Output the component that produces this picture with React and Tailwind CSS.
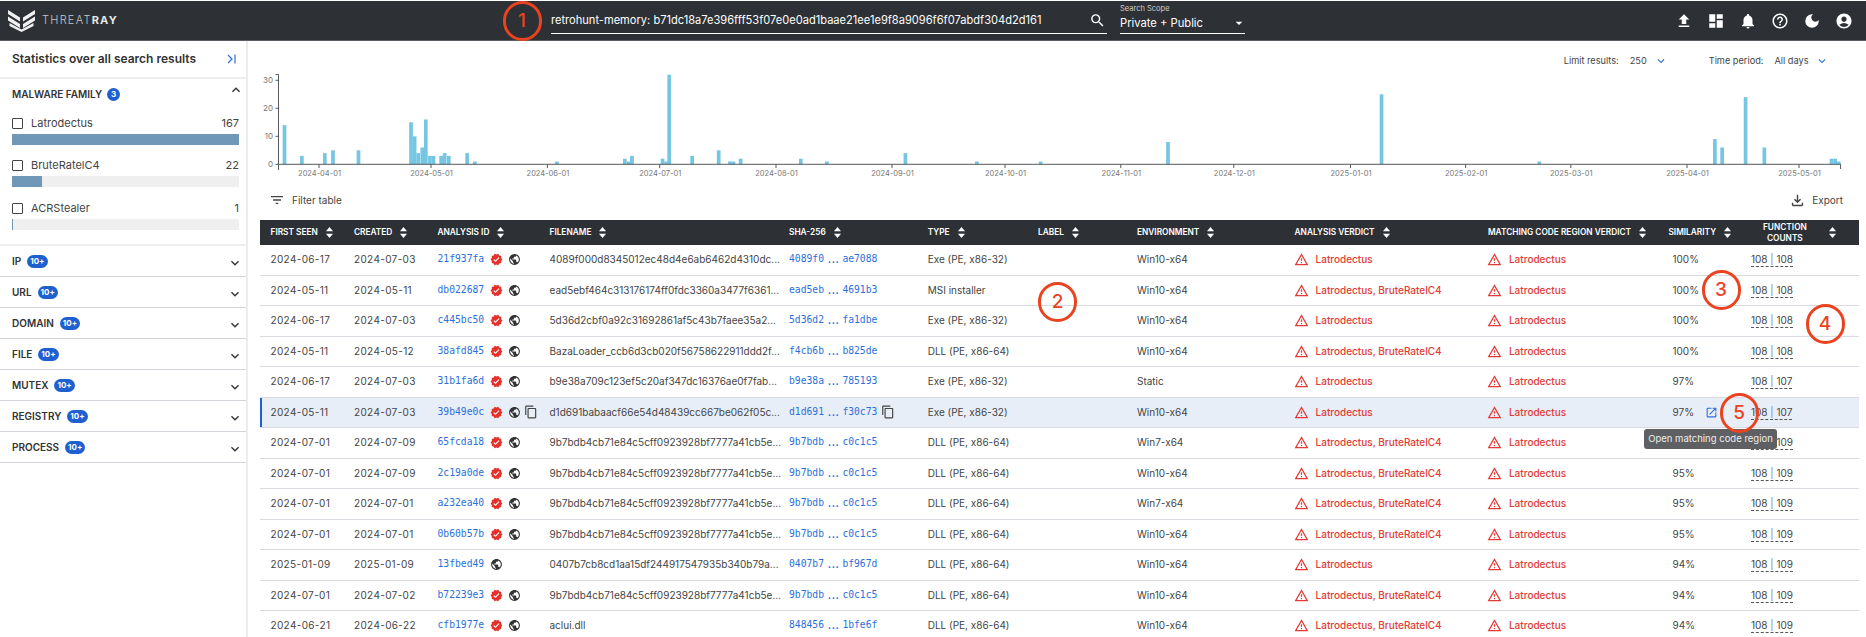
import React from "react";
import {
  MdFileUpload, MdDashboard, MdNotifications, MdHelpOutline, MdDarkMode, MdAccountCircle, MdSearch,
  MdArrowDropDown, MdKeyboardArrowDown, MdKeyboardArrowUp, MdFilterList, MdVerified, MdPublic,
  MdContentCopy, MdOpenInNew, MdOutlineFileDownload, MdOutlineWarningAmber,
} from "react-icons/md";

const bars5 = [[64,14],[98,3],[143,4],[159,5],[209,5],[312,15],[319,10],[326,4],[334,6],[341,16],[349,3],[356,3],[371,3],[378,4],[386,3],[422,4],[437,1],[598,1],[731,2],[738,1],[745,3],[805,2],[812,1],[818,32],[863,3],[915,5],[937,1],[944,1],[958,2],[1076,2],[1127,1],[1281,4],[1421,1],[1546,1]];
const bars6 = [[223,8],[633,25],[936,1],[1273,9],[1287,6],[1332,24],[1368,6],[1497,2],[1504,2],[1511,1]];
const bars = [...bars5.map(([x, v]) => [250 + x / 1.96, v]), ...bars6.map(([x, v]) => [1050 + x / 1.92, v])];
const ticks = [[319,"2024-04-01"],[431,"2024-05-01"],[547.4,"2024-06-01"],[659.7,"2024-07-01"],[776,"2024-08-01"],[892,"2024-09-01"],[1005,"2024-10-01"],[1120.8,"2024-11-01"],[1233.8,"2024-12-01"],[1350.5,"2025-01-01"],[1465.6,"2025-02-01"],[1570.8,"2025-03-01"],[1687,"2025-04-01"],[1799,"2025-05-01"]];

const L = ["Latrodectus"];
const LB = ["Latrodectus, BruteRatelC4"];
const E32 = "Exe (PE, x86-32)";
const D64 = "DLL (PE, x86-64)";
const W10 = "Win10-x64";
const W7 = "Win7-x64";
const F9 = "9b7bdb4cb71e84c5cff0923928bf7777a41cb5e...";
const rows = [
  ["2024-06-17","2024-07-03","21f937fa","4089f000d8345012ec48d4e6ab6462d4310dc...",["4089f0","ae7088"],E32,W10,L,"100%","108","108",1],
  ["2024-05-11","2024-05-11","db022687","ead5ebf464c313176174ff0fdc3360a3477f6361...",["ead5eb","4691b3"],"MSI installer",W10,LB,"100%","108","108",1],
  ["2024-06-17","2024-07-03","c445bc50","5d36d2cbf0a92c31692861af5c43b7faee35a2...",["5d36d2","fa1dbe"],E32,W10,L,"100%","108","108",1],
  ["2024-05-11","2024-05-12","38afd845","BazaLoader_ccb6d3cb020f56758622911ddd2f...",["f4cb6b","b825de"],D64,W10,LB,"100%","108","108",1],
  ["2024-06-17","2024-07-03","31b1fa6d","b9e38a709c123ef5c20af347dc16376ae0f7fab...",["b9e38a","785193"],E32,"Static",L,"97%","108","107",1],
  ["2024-05-11","2024-07-03","39b49e0c","d1d691babaacf66e54d48439cc667be062f05c...",["d1d691","f30c73"],E32,W10,L,"97%","108","107",1],
  ["2024-07-01","2024-07-09","65fcda18",F9,["9b7bdb","c0c1c5"],D64,W7,LB,"95%","108","109",1],
  ["2024-07-01","2024-07-09","2c19a0de",F9,["9b7bdb","c0c1c5"],D64,W10,LB,"95%","108","109",1],
  ["2024-07-01","2024-07-01","a232ea40",F9,["9b7bdb","c0c1c5"],D64,W7,LB,"95%","108","109",1],
  ["2024-07-01","2024-07-01","0b60b57b",F9,["9b7bdb","c0c1c5"],D64,W10,LB,"95%","108","109",1],
  ["2025-01-09","2025-01-09","13fbed49","0407b7cb8cd1aa15df244917547935b340b79a...",["0407b7","bf967d"],D64,W10,L,"94%","108","109",0],
  ["2024-07-01","2024-07-02","b72239e3",F9,["9b7bdb","c0c1c5"],D64,W10,LB,"94%","108","109",1],
  ["2024-06-21","2024-06-22","cfb1977e","aclui.dll",["848456","1bfe6f"],D64,W10,LB,"94%","108","109",1],
];

const gridCols = "grid grid-cols-[83.5px_83.5px_112px_239.5px_138.7px_110.3px_99px_157.6px_193.4px_180.5px_82.5px_1fr]";

function Sort() {
  return (
    <svg width="7" height="11" viewBox="0 0 7 11" className="shrink-0" fill="#fff">
      <path d="M0 4.2 3.5 0 7 4.2Z" />
      <path d="M0 6.8H7L3.5 11Z" />
    </svg>
  );
}

function Head({ children }) {
  return <div className="flex items-center gap-[8px]"><span>{children}</span><Sort /></div>;
}

function Verdict({ text }) {
  return (
    <div className="flex items-center gap-[7px] text-[#e23b36] font-medium">
      <MdOutlineWarningAmber className="text-[15px] -ml-[1px] shrink-0" />
      <span>{text}</span>
    </div>
  );
}

function Circle({ n, className }) {
  return (
    <div className={"absolute w-[39px] h-[40px] rounded-full border-[3.5px] border-[#e9431f] flex items-center justify-center text-[#e9431f] text-[19px] font-medium " + className}>
      {n}
    </div>
  );
}

function Badge({ children }) {
  return <span className="inline-flex items-center justify-center rounded-full bg-[#1f60d0] text-white text-[8px] font-bold h-[13px] min-w-[13px] px-[3px] leading-none">{children}</span>;
}

function Family({ name, count, fill }) {
  return (
    <div className="h-[42.5px]">
      <div className="h-[18px] flex items-center text-[11px] text-[#444]">
        <span className="w-[11px] h-[11px] border border-[#444] rounded-[1px] mr-[8px]" />
        <span className="flex-1">{name}</span>
        <span>{count}</span>
      </div>
      <div className="mt-[1.5px] h-[11px] bg-[#efefef]">
        <div className={"h-full " + fill} />
      </div>
    </div>
  );
}

const sections = ["IP", "URL", "DOMAIN", "FILE", "MUTEX", "REGISTRY", "PROCESS"];

export default function App() {
  return (
    <div className="relative w-[1866px] h-[637px] overflow-hidden bg-white font-[Inter,sans-serif] text-[#444] pt-[1px]">
      <header className="h-[40px] bg-[#2d3135] border-b border-[#5a5e62] flex items-center text-white">
        <div className="w-[551px] pl-[8px] flex items-center shrink-0">
          <svg width="27" height="22" viewBox="0 0 27 22" fill="#f0f0f0">
            <path d="M0 0 12 7.5V11.5L0 4Z" />
            <path d="M27 0 15 7.5V11.5L27 4Z" />
            <path d="M0 6.5 12 14V18L0 10.5Z" />
            <path d="M27 6.5 15 14V18L27 10.5Z" />
            <path d="M1.5 13 13.5 19.5 25.5 13V16L13.5 22 1.5 16Z" />
          </svg>
          <span className="ml-[7px] text-[11px] tracking-[1.25px]">
            <span className="font-light text-[#c4c6c8]">THREAT</span>
            <span className="font-bold text-[#e6e6e6]">RAY</span>
          </span>
        </div>
        <div className="w-[555.5px] h-[25px] mt-[1px] border-b border-white flex items-center justify-between shrink-0">
          <span className="text-[11.1px] whitespace-nowrap">retrohunt-memory: b71dc18a7e396fff53f07e0e0ad1baae21ee1e9f8a9096f6f07abdf304d2d161</span>
          <MdSearch className="text-[17px] mr-[1px]" />
        </div>
        <div className="ml-[13.5px] w-[125px] h-[30px] -mt-[3px] border-b border-white shrink-0 relative">
          <div className="text-[7.5px] leading-[10px] text-[#d0d0d0]">Search Scope</div>
          <div className="flex items-center justify-between text-[11.2px] leading-[18px]">
            <span>Private + Public</span>
            <MdArrowDropDown className="text-[16px] mr-[-2px]" />
          </div>
        </div>
        <div className="ml-auto pr-[13px] flex items-center gap-[14px] text-[18px]">
          <MdFileUpload />
          <MdDashboard />
          <MdNotifications />
          <MdHelpOutline />
          <MdDarkMode />
          <MdAccountCircle />
        </div>
      </header>

      <div className="flex h-[596px]">
        <aside className="w-[248px] shrink-0 border-r-2 border-[#ececec]">
          <div className="h-[38px] px-[12px] border-b-2 border-[#eee] flex items-center justify-between">
            <span className="text-[12px] font-semibold text-[#333]">Statistics over all search results</span>
            <svg width="9" height="10" viewBox="0 0 9 10" fill="none" stroke="#2a6fdb" strokeWidth="1.2" className="mr-[-2px]">
              <path d="M1 1 5 5 1 9" />
              <path d="M8 0.5V9.5" />
            </svg>
          </div>
          <div className="h-[167px] pl-[12px] pr-[7px] border-b-2 border-[#eee]">
            <div className="h-[30px] flex items-center gap-[5px] text-[10px] font-semibold text-[#333] relative">
              MALWARE FAMILY <Badge>3</Badge>
              <MdKeyboardArrowUp className="absolute right-[-5px] top-[3px] text-[16px]" />
            </div>
            <div className="mt-[5px]">
              <Family name="Latrodectus" count="167" fill="w-full bg-[#6f97b8]" />
              <Family name="BruteRatelC4" count="22" fill="w-[13%] bg-[#6f97b8]" />
              <Family name="ACRStealer" count="1" fill="w-[1px] bg-[#6f97b8]" />
            </div>
          </div>
          {sections.map((s) => (
            <div key={s} className="h-[31px] pl-[12px] pr-[7px] border-b border-[#d4d5da] flex items-center gap-[6px] text-[10px] font-semibold text-[#333] relative">
              {s} <Badge>10+</Badge>
              <MdKeyboardArrowDown className="absolute right-[3px] top-[9px] text-[16px]" />
            </div>
          ))}
        </aside>

        <main className="flex-1 min-w-0">
          <div className="h-[27px] pt-[13px] flex justify-end text-[9.2px] leading-[14px] text-[#444] pr-[37px]">
            <span>Limit results:</span>
            <span className="ml-[11px]">250</span>
            <MdKeyboardArrowDown className="ml-[7px] text-[14px] text-[#2a6fdb]" />
            <span className="ml-[41px]">Time period:</span>
            <span className="ml-[11px]">All days</span>
            <MdKeyboardArrowDown className="ml-[6.5px] text-[14px] text-[#2a6fdb]" />
          </div>
          <svg width="1618" height="118" viewBox="248 68 1618 118" className="block">
            {bars.map(([x, v], i) => (
              <rect key={i} x={x} y={164.3 - v * 2.8} width="3.7" height={v * 2.8} fill="#76c6e3" />
            ))}
            <path d="M275.5 74.5H278.5V164.3H1840.6V169" fill="none" stroke="#55585c" strokeWidth="1" />
            <path d="M278.5 164.3V170" stroke="#55585c" strokeWidth="1" />
            {[[30, 80.3], [20, 108.3], [10, 136.3], [0, 164.3]].map(([t, y]) => (
              <g key={t}>
                <path d={`M275.5 ${y}H278.5`} stroke="#55585c" />
                <text x="273" y={y + 3} textAnchor="end" fontSize="8" fill="#777">{t}</text>
              </g>
            ))}
            {ticks.map(([x, t]) => (
              <g key={t}>
                <path d={`M${x} 164.3V168`} stroke="#55585c" />
                <text x={x + 0.5} y="175.5" textAnchor="middle" fontSize="7.5" fill="#777">{t}</text>
              </g>
            ))}
          </svg>
          <div className="h-[28px] mb-[6px] pl-[21px] pr-[23px] flex items-center justify-between text-[10px]">
            <div className="flex items-center gap-[7px]">
              <MdFilterList className="text-[16px]" />
              <span>Filter table</span>
            </div>
            <div className="flex items-center gap-[6px]">
              <MdOutlineFileDownload className="text-[17px]" />
              <span>Export</span>
            </div>
          </div>

          <div className="ml-[11.5px] mr-[7px] text-[10px]">
            <div className={gridCols + " h-[25px] pl-[11px] bg-[#2d3135] text-white items-center text-[8.3px] font-semibold uppercase"}>
              <Head>First seen</Head>
              <Head>Created</Head>
              <Head>Analysis ID</Head>
              <Head>Filename</Head>
              <Head>SHA-256</Head>
              <Head>Type</Head>
              <Head>Label</Head>
              <Head>Environment</Head>
              <Head>Analysis verdict</Head>
              <Head>Matching code region verdict</Head>
              <Head>Similarity</Head>
              <div className="flex items-center justify-between pl-[12px] pr-[23.5px]">
                <span className="text-center leading-[11px]">Function<br />counts</span>
                <Sort />
              </div>
            </div>
            {rows.map((r, i) => {
              const sel = i === 5;
              return (
                <div key={r[2]} className={gridCols + " h-[30.5px] items-center pl-[11px] border-b border-[#d9dbe0] relative " + (sel ? "bg-[#e8eef8]" : "")}>
                  {sel && <div className="absolute left-0 top-0 bottom-0 w-[2px] bg-[#1f60d0]" />}
                  <div className="tracking-[0.35px]">{r[0]}</div>
                  <div className="tracking-[0.35px]">{r[1]}</div>
                  <div className="flex items-center">
                    <span className="font-['DejaVu_Sans_Mono',monospace] text-[9.7px] text-[#2a6fdb] w-[47px]">{r[2]}</span>
                    {r[11] === 1 && <MdVerified className="ml-[5px] text-[13px] text-[#e5312b]" />}
                    <MdPublic className="ml-[5px] text-[13px] text-[#333]" />
                    {sel && <MdContentCopy className="ml-[3px] text-[14px] text-[#444]" />}
                  </div>
                  <div className="whitespace-nowrap">{r[3]}</div>
                  <div className="flex items-center text-[#2a6fdb]">
                    <span className="font-['DejaVu_Sans_Mono',monospace] text-[9.7px]">{r[4][0]}</span>
                    <span className="ml-[3.7px] mr-[4px] w-[10.7px] font-bold tracking-[0.6px] whitespace-nowrap">...</span>
                    <span className="font-['DejaVu_Sans_Mono',monospace] text-[9.7px]">{r[4][1]}</span>
                    {sel && <MdContentCopy className="ml-[4px] text-[14px] text-[#444]" />}
                  </div>
                  <div>{r[5]}</div>
                  <div />
                  <div>{r[6]}</div>
                  <Verdict text={r[7][0]} />
                  <Verdict text="Latrodectus" />
                  <div className="flex items-center pl-[4px]">
                    <span>{r[8]}</span>
                    {sel && <MdOpenInNew className="ml-[11px] text-[13px] text-[#2a6fdb]" />}
                  </div>
                  <div>
                    <span className="border-b border-dashed border-[#555] pb-[1px]">{r[9]} <span className="text-[#888]">|</span> {r[10]}</span>
                  </div>
                </div>
              );
            })}
          </div>
        </main>
      </div>

      <div className="absolute left-[1644px] top-[429px] w-[133px] h-[20px] rounded-[3px] bg-[#5f6063] text-[#eee] text-[9.5px] flex items-center justify-center">Open matching code region</div>
      <Circle n="1" className="left-[502.5px] top-[1px]" />
      <Circle n="2" className="left-[1038px] top-[282px]" />
      <Circle n="3" className="left-[1701.5px] top-[270px]" />
      <Circle n="4" className="left-[1805.5px] top-[304px]" />
      <Circle n="5" className="left-[1719.5px] top-[393px]" />
    </div>
  );
}
